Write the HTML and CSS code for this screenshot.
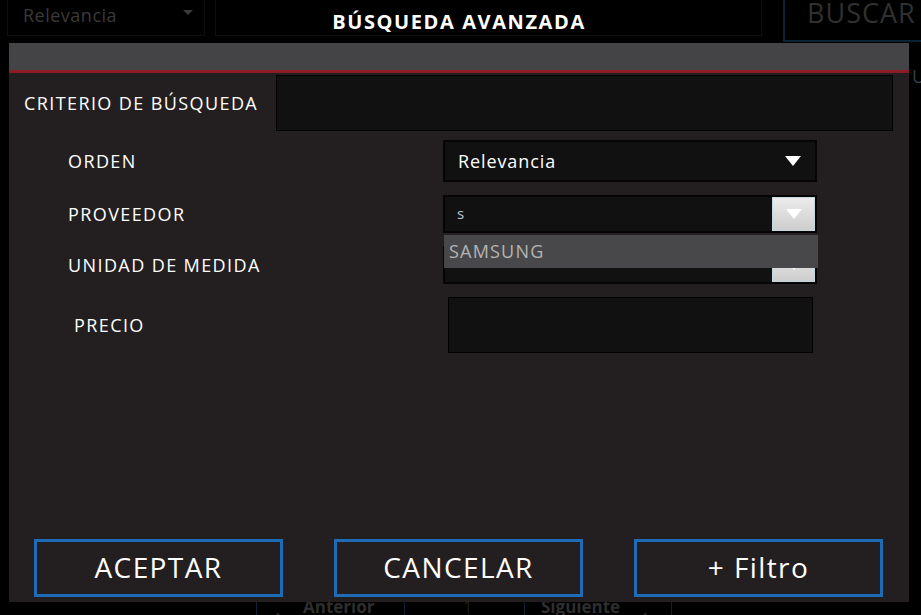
FILE: index.html
```html
<!DOCTYPE html>
<html lang="es">
<head>
<meta charset="utf-8">
<title>Búsqueda avanzada</title>
<link rel="stylesheet" href="styles.css">
</head>
<body>
<div class="page">
  <div class="topbar">
    <div class="bg-select"><span>Relevancia</span><span class="bg-caret"></span></div>
    <div class="bg-search"></div>
    <div class="bg-buscar">BUSCAR</div>
  </div>
  <div class="bg-side">U</div>
  <div class="pager">
    <div class="pg pg-prev"><span class="chev chev-l"></span><b>Anterior</b></div>
    <div class="pg pg-num">1</div>
    <div class="pg pg-next"><b>Siguiente</b><span class="chev chev-r"></span></div>
  </div>
</div>

<div class="modal">
  <div class="modal-title">BÚSQUEDA AVANZADA</div>
  <div class="modal-head"></div>
  <div class="modal-body">
    <div class="row row-criterio">
      <label class="lbl lbl-criterio">CRITERIO DE BÚSQUEDA</label>
      <div class="input input-criterio"></div>
    </div>
    <div class="row row-orden">
      <label class="lbl">ORDEN</label>
      <div class="select">
        <span>Relevancia</span>
        <svg class="tri" width="16" height="10" viewBox="0 0 16 10"><path d="M0 0H16L8 10Z" fill="#fff"/></svg>
      </div>
    </div>
    <div class="row row-prov">
      <label class="lbl">PROVEEDOR</label>
      <div class="combo">
        <span class="combo-text">s</span>
        <span class="combo-btn"><svg width="16" height="10" viewBox="0 0 16 10"><path d="M0 0H16L8 10Z" fill="#fff"/></svg></span>
        <ul class="suggest"><li>SAMSUNG</li></ul>
      </div>
    </div>
    <div class="row row-unidad">
      <label class="lbl">UNIDAD DE MEDIDA</label>
      <div class="combo">
        <span class="combo-text"></span>
        <span class="combo-btn"><svg width="16" height="10" viewBox="0 0 16 10"><path d="M0 0H16L8 10Z" fill="#fff"/></svg></span>
      </div>
    </div>
    <div class="row row-precio">
      <label class="lbl lbl-precio">PRECIO</label>
      <div class="input input-precio"></div>
    </div>
    <div class="actions">
      <button class="btn">ACEPTAR</button>
      <button class="btn">CANCELAR</button>
      <button class="btn">+ Filtro</button>
    </div>
  </div>
</div>
</body>
</html>
```

FILE: styles.css
```css
* { box-sizing: border-box; }
html, body { margin: 0; padding: 0; }
body {
  width: 921px;
  height: 615px;
  overflow: hidden;
  background: #000;
  font-family: "Open Sans", "Liberation Sans", sans-serif;
}

/* underlying page */
.page {
  height: 615px;
  display: flex;
  flex-direction: column;
}
.topbar {
  display: flex;
  align-items: flex-start;
  padding-left: 7px;
}
.topbar > div { flex-shrink: 0; }
.bg-select {
  width: 198px;
  height: 36px;
  border: 1px solid #0f0f0f;
  border-top: none;
  display: flex;
  align-items: center;
  justify-content: space-between;
  padding: 0 11px 6px 15px;
  color: #3a3a3a;
  font-size: 18px;
  letter-spacing: 0.5px;
}
.bg-caret {
  width: 0; height: 0;
  border-left: 5px solid transparent;
  border-right: 5px solid transparent;
  border-top: 5px solid #3a3a3a;
  margin-top: -4px;
}
.bg-search {
  width: 547px;
  height: 36px;
  margin-left: 10px;
  border: 1px solid #0f0f0f;
  border-top: none;
}
.bg-buscar {
  margin-left: 21px;
  width: 160px;
  height: 42px;
  border: 2px solid #0c2235;
  border-top: none;
  color: #303030;
  font-size: 27px;
  padding: 0 0 0 22px;
  line-height: 26px;
  letter-spacing: 1px;
}
.bg-side {
  align-self: flex-end;
  color: #3a3f48;
  font-size: 18px;
  margin-top: 22px;
  margin-right: -4px;
}
.pager {
  margin-top: auto;
  display: flex;
  height: 22px;
  margin-left: 256px;
}
.pg {
  height: 22px;
  border-left: 1px solid #0c2235;
  color: #2e2e2e;
  font-size: 17px;
  display: flex;
  align-items: flex-end;
  line-height: 17px;
}
.pg-prev { width: 148px; padding-left: 22px; gap: 10px; }
.pg-num { width: 120px; padding-left: 58px; font-weight: 300; }
.pg-next { width: 148px; padding-left: 16px; gap: 10px; border-right: 1px solid #0c2235; }
.chev { display: inline-block; width: 14px; height: 14px; border-left: 2px solid #2a2a2a; transform: rotate(-45deg); margin-bottom: -6px; }
.chev-r { transform: rotate(45deg); border-left: none; border-right: 2px solid #2a2a2a; }

/* modal */
.modal {
  position: absolute;
  left: 9px;
  top: 0;
  width: 900px;
  height: 602px;
  display: flex;
  flex-direction: column;
}
.modal-title {
  height: 43px;
  color: #fff;
  font-weight: 700;
  font-size: 20px;
  text-align: center;
  line-height: 44px;
  letter-spacing: 1.6px;
}
.modal-head {
  height: 30px;
  background: #444446;
  border-bottom: 3px solid #8d1b25;
}
.modal-body {
  flex: 1;
  background: #231f20;
  display: flex;
  flex-direction: column;
  padding-top: 2px;
}
.row {
  display: flex;
  align-items: center;
}
.lbl {
  color: #fff;
  font-size: 18px;
  width: 434px;
  padding-left: 59px;
  letter-spacing: 1.4px;
}
.lbl-criterio { width: 267px; padding-left: 15px; }
.lbl-precio { padding-left: 65px; width: 439px; }

.input {
  background: #111;
  border: 1px solid #000;
}
.input-criterio { width: 617px; height: 56px; }
.row-orden { margin-top: 9px; }
.select {
  width: 374px;
  height: 42px;
  background: #111;
  border: 2px solid #050505;
  display: flex;
  align-items: center;
  justify-content: space-between;
  padding: 0 14px 0 13px;
  color: #fff;
  font-size: 18px;
  letter-spacing: 0.9px;
}
.row-prov { margin-top: 13px; position: relative; z-index: 2; }
.combo {
  position: relative;
  width: 374px;
  height: 38px;
  background: #111;
  border: 2px solid #050505;
  display: flex;
  align-items: center;
}
.combo-text {
  flex: 1;
  color: #b9c9d4;
  font-size: 15px;
  padding-left: 12px;
  padding-bottom: 3px;
}
.combo-btn {
  width: 43px;
  height: 34px;
  background: linear-gradient(#ececec, #cdcdcd);
  border: 1px solid #c2d8de;
  display: flex;
  align-items: center;
  justify-content: center;
}
.suggest {
  position: absolute;
  left: -1px;
  top: 38px;
  width: 374px;
  height: 33px;
  margin: 0;
  padding: 0 0 0 5px;
  list-style: none;
  background: #48484a;
  color: #b4b4b4;
  font-size: 18px;
  line-height: 33px;
  letter-spacing: 1.2px;
}
.row-unidad { margin-top: 13px; }
.row-precio { margin-top: 13px; }
.input-precio { width: 365px; height: 56px; }

.actions {
  margin-top: auto;
  margin-bottom: 5px;
  display: flex;
  gap: 51px;
  padding-left: 25px;
}
.btn {
  width: 249px;
  height: 58px;
  background: transparent;
  border: 3px solid #1d6cb5;
  color: #fff;
  font-family: "Open Sans", "Liberation Sans", sans-serif;
  font-size: 28px;
  letter-spacing: 1.4px;
  padding: 0 0 3px;
}
```
